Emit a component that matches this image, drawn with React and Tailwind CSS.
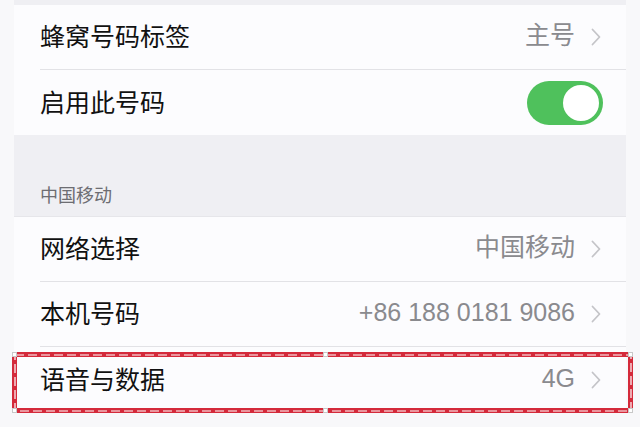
import React from "react";

const font = { fontFamily: '"Noto Sans CJK SC", "Noto Sans", sans-serif' };

function Chevron() {
  return (
    <svg width="10" height="18" viewBox="0 0 10 18" className="shrink-0 ml-[16px]">
      <path d="M1.5 1.5 L8.5 9 L1.5 16.5" fill="none" stroke="#c4c4c8" strokeWidth="1.8" strokeLinecap="round" strokeLinejoin="round" />
    </svg>
  );
}

function Row({ label, value, sep = true, children }) {
  return (
    <div className="h-[65px] flex items-center pl-[26px] bg-[#fcfcfe]">
      <div className={`h-full flex-1 flex items-center pr-[25px] ${sep ? "border-b border-[#e2e2e6]" : ""}`}>
        <span className="text-[25px] text-[#111111] leading-none flex-1 pb-[3px]">{label}</span>
        {value !== undefined && (
          <>
            <span className="text-[25px] text-[#8a8a8e] leading-none pb-[3px]" style={{ fontFamily: '"Liberation Sans", "Noto Sans CJK SC", sans-serif' }}>{value}</span>
            <Chevron />
          </>
        )}
        {children}
      </div>
    </div>
  );
}

function Toggle() {
  return (
    <div className="w-[76px] h-[44px] rounded-full bg-[#4fc15c] flex items-center justify-end p-[2px] mr-[-2px]">
      <div className="w-[40px] h-[40px] rounded-full bg-white border-[2px] border-[#4fc15c]" />
    </div>
  );
}

function Handle({ className }) {
  return <div className={`absolute w-[5px] h-[5px] bg-white border border-[#c8c8c8] ${className}`} />;
}

export default function App() {
  return (
    <div className="w-[640px] h-[427px] bg-[#f8f8fa] overflow-hidden" style={font}>
      <div className="mx-[14px] flex flex-col">
        <div className="h-[5px] bg-[#efeff3]" />
        <Row label="蜂窝号码标签" value="主号" />
        <Row label="启用此号码" sep={false}>
          <Toggle />
        </Row>
        <div className="h-[82px] bg-[#efeff3] flex items-end pl-[26px] pb-[13px] border-b border-[#e6e6ea]">
          <span className="text-[18px] text-[#6d6d72] leading-none">中国移动</span>
        </div>
        <Row label="网络选择" value="中国移动" />
        <Row label="本机号码" value="+86 188 0181 9086" />
        <div className="relative">
          <Row label="语音与数据" value="4G" sep={false} />
          <div className="absolute left-[-2px] right-[-7px] top-[5px] h-[61px] border-[5px] border-[#d42a3b] pointer-events-none">
            <svg className="absolute inset-[-2.5px] w-[calc(100%+5px)] h-[calc(100%+5px)] overflow-visible">
              <rect x="0" y="0" width="100%" height="100%" fill="none" stroke="#ffffff" strokeWidth="1.2" strokeDasharray="9 4" />
            </svg>
            <Handle className="left-[-5px] top-[-5px]" />
            <Handle className="right-[-5px] top-[-5px]" />
            <Handle className="left-[-5px] bottom-[-5px]" />
            <Handle className="right-[-5px] bottom-[-5px]" />
            <Handle className="left-1/2 top-[-5px]" />
            <Handle className="left-1/2 bottom-[-5px]" />
          </div>
        </div>
      </div>
    </div>
  );
}
